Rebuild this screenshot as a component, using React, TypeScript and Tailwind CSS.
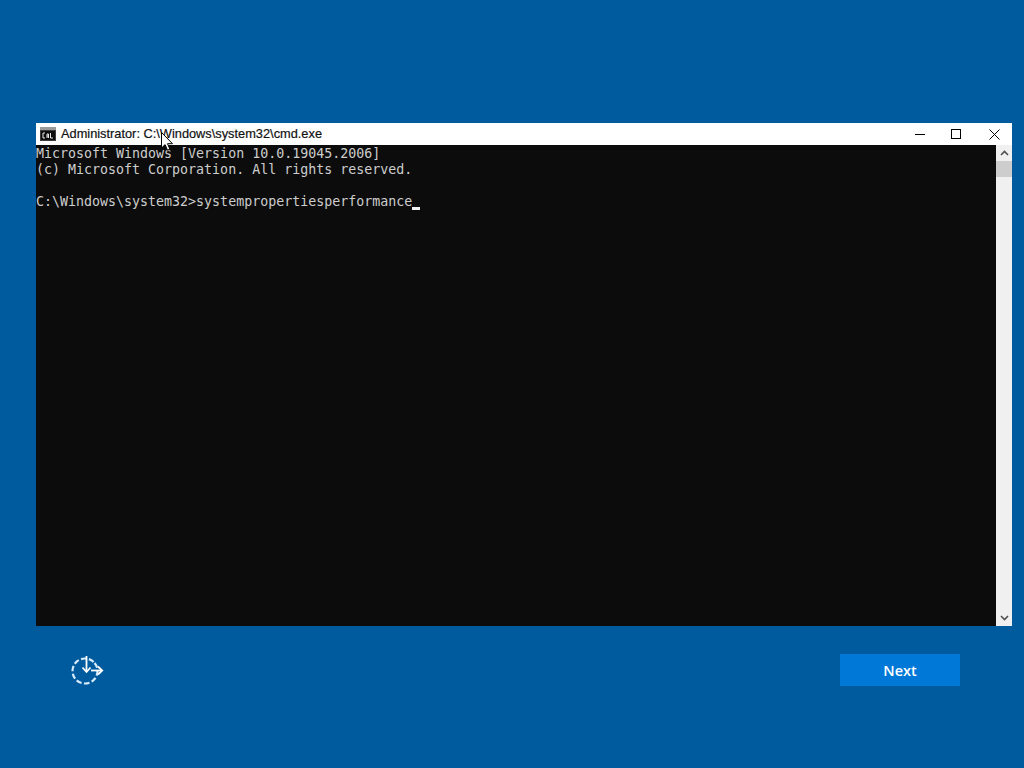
const lines = [
  "Microsoft Windows [Version 10.0.19045.2006]",
  "(c) Microsoft Corporation. All rights reserved.",
  "",
];

export default function App() {
  return (
    <div className="relative h-[768px] w-[1024px] overflow-hidden bg-[#005a9e] pt-[123px] font-['Liberation_Sans',sans-serif]">
      {/* Console window */}
      <div className="ml-[36px] flex h-[503px] w-[976px] flex-col bg-white">
        <div className="flex h-[22px] shrink-0 items-center bg-white pl-[4px]">
          <svg width="16" height="14" viewBox="0 0 16 14" className="shrink-0">
            <rect x="0" y="0" width="16" height="14" fill="#3c3c3c" />
            <rect x="0" y="0" width="16" height="3" fill="#9a9a9a" />
            <rect x="1" y="4" width="14" height="9" fill="#0c0c0c" />
            <path d="M5 6H3v5h2M7 11V7h1.5v4M7 9h1.5M10.5 6v5H13" fill="none" stroke="#e8e8e8" strokeWidth="1" />
          </svg>
          <span className="ml-[5px] text-[12.8px] leading-none text-[#111111] [-webkit-text-stroke:0.2px_#111111]">
            Administrator: C:\Windows\system32\cmd.exe
          </span>
          <div className="ml-auto flex h-full items-center">
            <div className="flex h-full w-[32px] items-center justify-center">
              <div className="h-px w-[10px] bg-black" />
            </div>
            <div className="flex h-full w-[40px] items-center justify-center">
              <div className="h-[10px] w-[10px] border border-black" />
            </div>
            <div className="flex h-full w-[36px] items-center justify-center">
              <svg width="11" height="11" viewBox="0 0 11 11">
                <path d="M0.5 0.5l10 10M10.5 0.5l-10 10" stroke="#000" strokeWidth="1" fill="none" />
              </svg>
            </div>
          </div>
        </div>

        <div className="flex min-h-0 flex-1">
          <div className="flex-1 bg-[#0c0c0c] pt-px font-['DejaVu_Sans_Mono',monospace] text-[13.3px] leading-[16px] text-[#cccccc]">
            {lines.map((line, i) => (
              <div key={i} className="h-[16px] whitespace-pre">
                {line}
              </div>
            ))}
            <div className="flex h-[16px] whitespace-pre">
              <span>{"C:\\Windows\\system32>systempropertiesperformance"}</span>
              <span className="mt-[13px] h-[3px] w-[8px] bg-[#f2f2f2]" />
            </div>
          </div>

          {/* Scrollbar */}
          <div className="flex w-[16px] shrink-0 flex-col bg-[#f0f0f0]">
            <div className="flex h-[16px] shrink-0 items-center justify-center">
              <svg width="9" height="6" viewBox="0 0 9 6">
                <path d="M1 5l3.5-3.5L8 5" fill="none" stroke="#505050" strokeWidth="1.6" />
              </svg>
            </div>
            <div className="h-[16px] shrink-0 bg-[#cdcdcd]" />
            <div className="flex-1" />
            <div className="flex h-[17px] shrink-0 items-center justify-center">
              <svg width="9" height="6" viewBox="0 0 9 6">
                <path d="M1 1l3.5 3.5L8 1" fill="none" stroke="#505050" strokeWidth="1.6" />
              </svg>
            </div>
          </div>
        </div>
      </div>

      {/* Bottom row */}
      <div className="mt-[28px] flex items-start justify-between pl-[70px] pr-[64px]">
        <svg width="36" height="32" viewBox="0 0 36 32">
          <circle cx="15" cy="17" r="12.5" fill="none" stroke="#d7ecfa" strokeWidth="2.2" strokeDasharray="5.5 2.4" transform="rotate(-40 15 17)" />
          <path d="M16.5 2v15" fill="none" stroke="#ffffff" strokeWidth="1.8" />
          <path d="M12.5 13.5l4 4.5 4-4.5" fill="none" stroke="#ffffff" strokeWidth="1.8" />
          <path d="M21 16.5h11" fill="none" stroke="#ffffff" strokeWidth="1.8" />
          <path d="M28 12.5l4.2 4-4.2 4" fill="none" stroke="#ffffff" strokeWidth="1.8" />
        </svg>
        <button className="flex h-[32px] w-[120px] items-center justify-center bg-[#0078d7] pt-px font-['Open_Sans',sans-serif] text-[14.5px] font-semibold text-white">
          Next
        </button>
      </div>

      {/* Mouse pointer */}
      <svg width="13" height="20" viewBox="0 0 13 20" className="absolute left-[161px] top-[132px]">
        <path d="M0.5 0.5v15.5l3.6-3.4 2.4 5.6 2.4-1-2.4-5.5h5z" fill="#ffffff" stroke="#000000" strokeWidth="1" />
      </svg>
    </div>
  );
}
